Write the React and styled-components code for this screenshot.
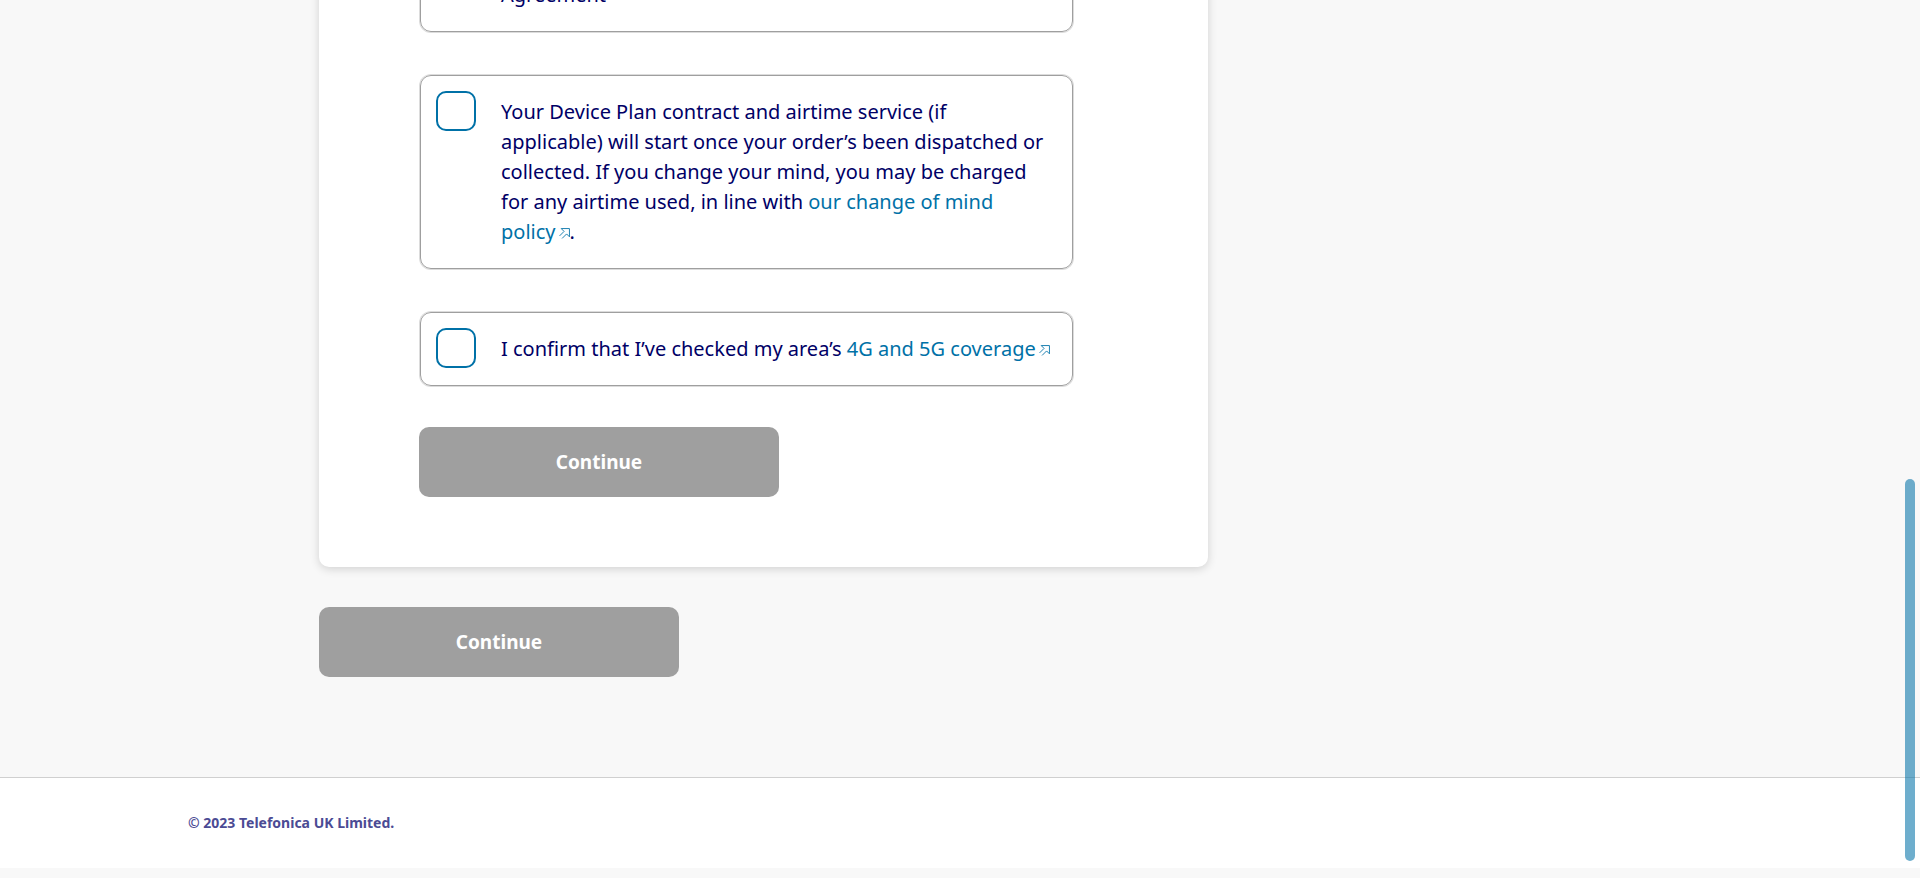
import React from "react";
import styled, { createGlobalStyle } from "styled-components";

const GlobalStyle = createGlobalStyle`
  *, *::before, *::after { box-sizing: border-box; }
  body {
    margin: 0;
    background: #f8f8f8;
    color: #000066;
    font-family: "Noto Sans", "Open Sans", sans-serif;
    font-size: 20px;
    line-height: 30px;
  }
`;

/* The view rests at the end of the page, so earlier content runs off the top. */
const Page = styled.div`
  position: relative;
  height: 100vh;
  overflow: hidden;
  display: flex;
  flex-direction: column;
  justify-content: flex-end;
  padding-bottom: 10px;
`;

const Main = styled.main`
  flex: none;
  width: 100%;
  max-width: 1544px;
  margin: 0 auto;
  padding: 0 131px 100px;
`;

const Card = styled.form`
  max-width: 889px;
  margin-bottom: 40px;
  padding: 70px 134px 70px 100px;
  background: #fff;
  border-radius: 10px;
  box-shadow: 0 2px 10px rgba(0, 0, 0, 0.16);
`;

const TermsList = styled.div`
  display: flex;
  flex-direction: column;
  gap: 43px;
  padding: 0 1px;
  margin-bottom: 41px;
`;

const Term = styled.div`
  display: flex;
  align-items: flex-start;
  gap: 25px;
  min-height: ${(p) => (p.$tall ? "194px" : "74px")};
  padding: 15px;
  border: 1px solid #9f9f9f;
  border-radius: 11px;
  box-shadow: 0 0 0 1px #dcdcdc;
`;

const Checkbox = styled.input`
  appearance: none;
  flex: none;
  width: 40px;
  height: 40px;
  margin: 0;
  background: #fff;
  border: 2px solid #0071a7;
  border-radius: 10px;
  cursor: pointer;
  &:checked { background: #0071a7; }
`;

const TermText = styled.label`
  flex: 1;
  align-self: ${(p) => (p.$end ? "flex-end" : "flex-start")};
  padding: 6px 6px 6px 0;
`;

const Link = styled.a`
  color: #0071a7;
  text-decoration: none;
  &:hover { text-decoration: underline; }
`;

const Icon = styled.svg`
  width: 11px;
  height: 11px;
  margin-left: 3px;
`;

const Button = styled.button`
  display: block;
  width: 360px;
  max-width: 100%;
  height: 70px;
  border: 0;
  border-radius: 10px;
  background: #9f9f9f;
  color: #fff;
  font: inherit;
  font-size: 19px;
  font-weight: 700;
`;

const Footer = styled.footer`
  flex: none;
  border-top: 1px solid #d0d0d0;
  background: #fff;
`;

const FooterText = styled.p`
  max-width: 1544px;
  margin: 0 auto;
  padding: 30px 0;
  color: #4b4b94;
  font-size: 14px;
  font-weight: 700;
`;

const ScrollThumb = styled.div`
  position: absolute;
  right: 5px;
  bottom: 17px;
  width: 10px;
  height: 382px;
  border-radius: 5px;
  background: rgba(0, 113, 167, 0.57);
`;

const ExternalIcon = () => (
  <Icon viewBox="0 0 10 10" fill="none" stroke="#0071a7" strokeWidth="0.8" aria-hidden="true">
    <path d="M.5 7.2 4.6 3.1 2 .5H9.5V8L6.9 5.4 2.8 9.5" />
  </Icon>
);

export default function App() {
  return (
    <>
      <GlobalStyle />
      <Page>
        <Main>
          <Card>
            <TermsList>
              <Term $tall>
                <Checkbox type="checkbox" id="agreement" />
                <TermText htmlFor="agreement" $end>Agreement</TermText>
              </Term>
              <Term>
                <Checkbox type="checkbox" id="device-plan" />
                <TermText htmlFor="device-plan">
                  Your Device Plan contract and airtime service (if applicable) will start once your
                  order’s been dispatched or collected. If you change your mind, you may be charged for
                  any airtime used, in line with{" "}
                  <Link href="#policy">our change of mind policy<ExternalIcon /></Link>.
                </TermText>
              </Term>
              <Term>
                <Checkbox type="checkbox" id="coverage" />
                <TermText htmlFor="coverage">
                  I confirm that I’ve checked my area’s{" "}
                  <Link href="#coverage-map">4G and 5G coverage<ExternalIcon /></Link>
                </TermText>
              </Term>
            </TermsList>
            <Button type="button">Continue</Button>
          </Card>
          <Button type="button">Continue</Button>
        </Main>
        <Footer>
          <FooterText>© 2023 Telefonica UK Limited.</FooterText>
        </Footer>
        <ScrollThumb />
      </Page>
    </>
  );
}
